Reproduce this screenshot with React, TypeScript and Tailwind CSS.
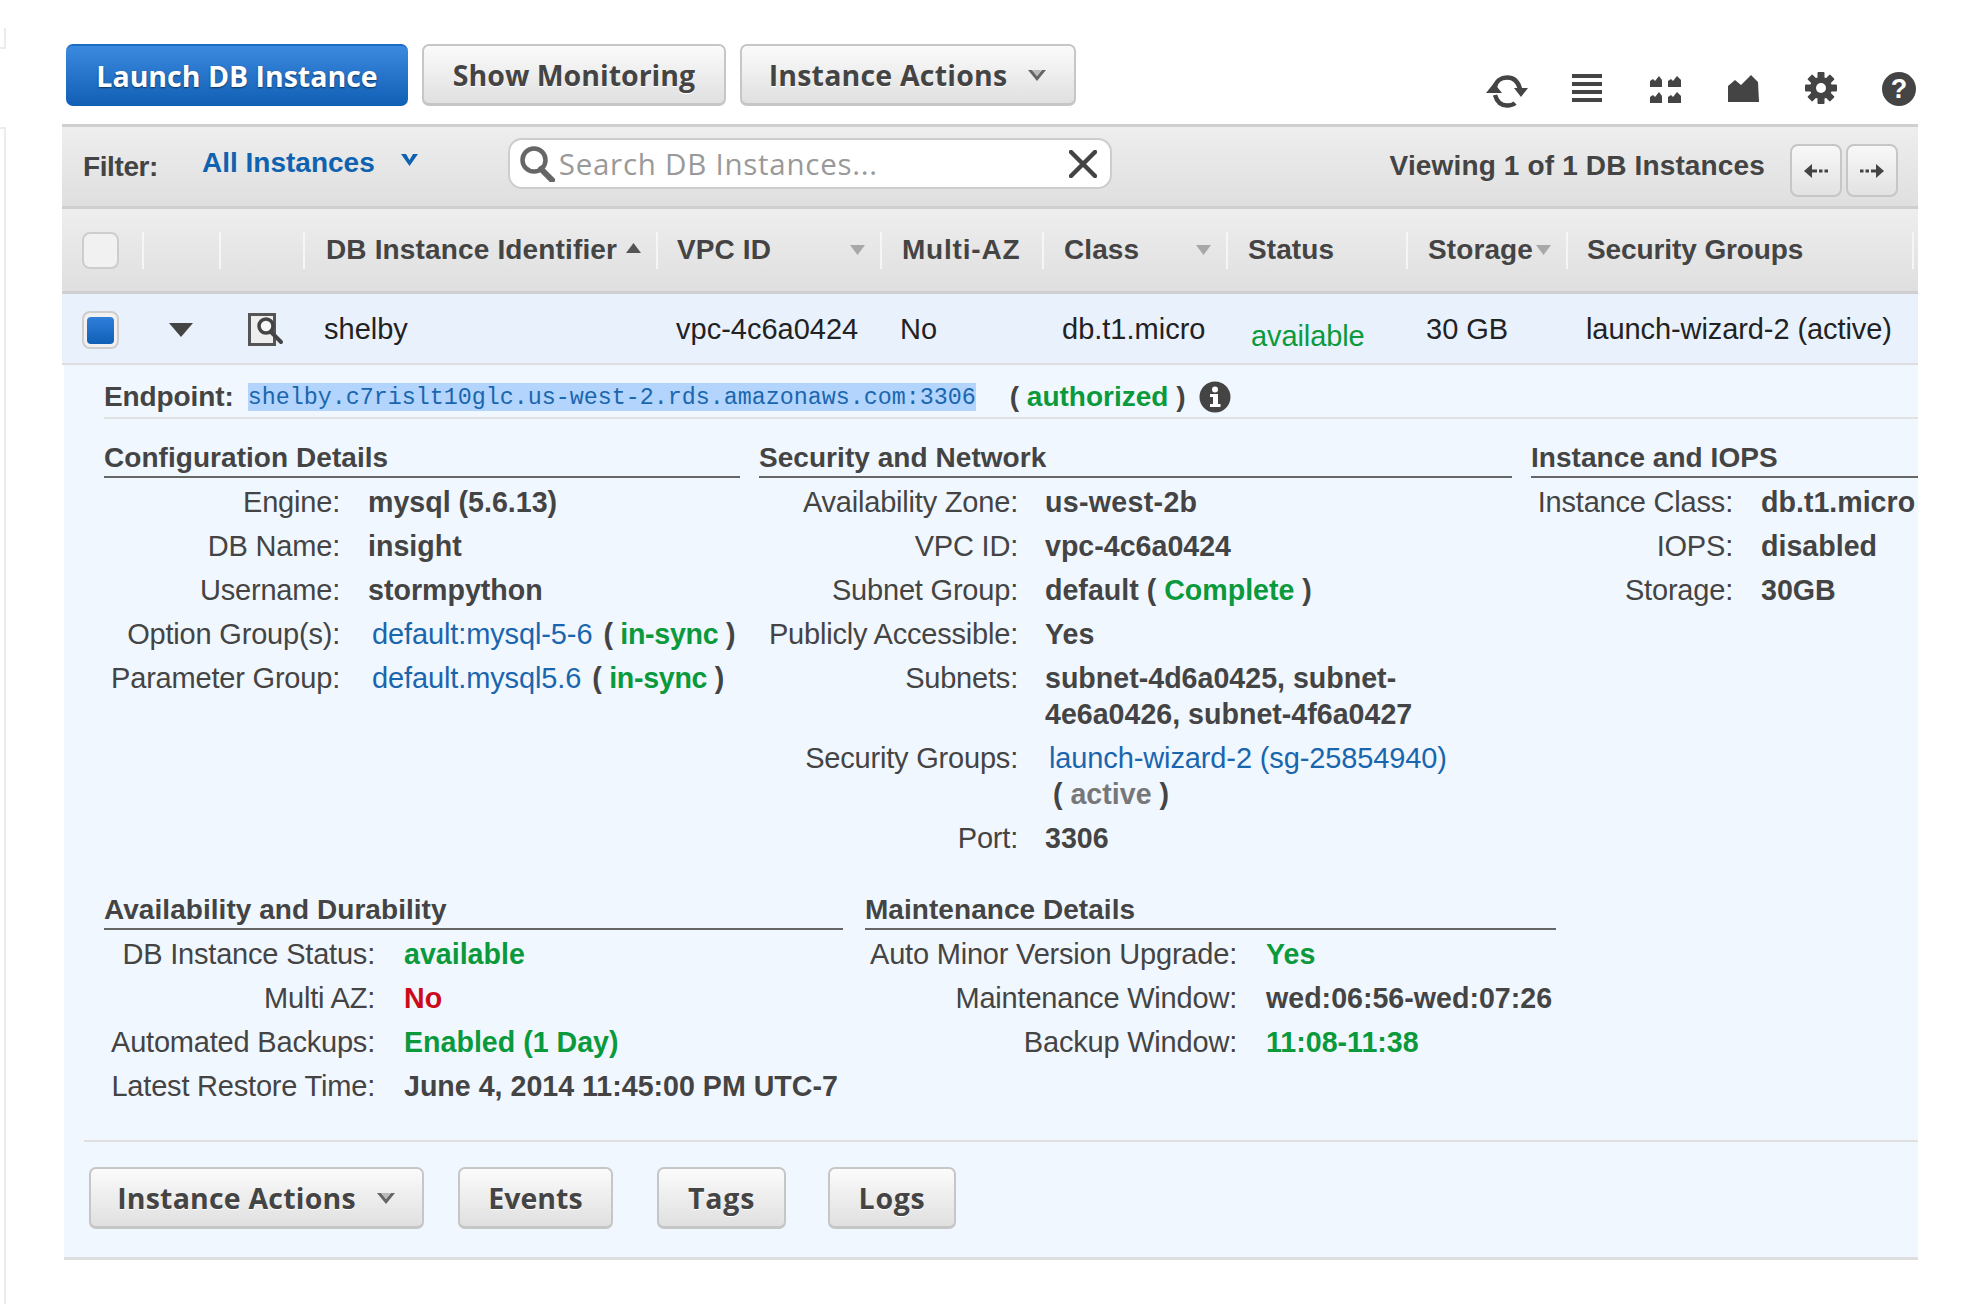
import type { ReactNode } from "react";

const G = ({ children }: { children: ReactNode }) => <span className="text-[#0a9a3c]">{children}</span>;
const A = ({ children }: { children: ReactNode }) => (
  <span className="font-normal text-[29px] text-[#1a66ae] tracking-[-0.12px]">{children}</span>
);

function Chevrons() {
  return (
    <svg width="20" height="14" viewBox="0 0 20 14">
      <path d="M1 1 L10 12 L19 1 L15 1 L10 7 L5 1 Z" fill="#666" />
      <path d="M5 1 L10 7 L15 1 Z" fill="#bbb" />
    </svg>
  );
}

function GrayBtn({ w, children }: { w: string; children: ReactNode }) {
  return (
    <div
      className={`${w} h-[62px] shrink-0 rounded-[7px] border-2 border-b-[3px] border-[#c6c6c6] bg-gradient-to-b from-[#fbfbfb] to-[#e0e0e0] flex items-center justify-center gap-[20px] pt-[2px] font-['Open_Sans',sans-serif] font-bold text-[28.5px] text-[#444] [text-shadow:0_1px_0_#fff]`}
    >
      {children}
    </div>
  );
}

function Row({ l, w, gap, children }: { l: string; w: string; gap: string; children: ReactNode }) {
  return (
    <div className={`flex ${gap} py-[4px] leading-[36px]`}>
      <div className={`${w} shrink-0 text-right text-[29px] tracking-[-0.2px] whitespace-nowrap`}>{l}</div>
      <div className="font-bold text-[28.6px] min-w-0 whitespace-nowrap">{children}</div>
    </div>
  );
}

function Heading({ children }: { children: ReactNode }) {
  return (
    <div className="h-[38px] leading-[36px] border-b-2 border-[#666] font-bold text-[28px] tracking-[0.05px] text-[#444] whitespace-nowrap">
      {children}
    </div>
  );
}

function Caret({ up }: { up?: boolean }) {
  return up ? (
    <svg width="15" height="10" viewBox="0 0 15 10" className="mb-[4px]">
      <path d="M7.5 0 L15 10 L0 10 Z" fill="#555" />
    </svg>
  ) : (
    <svg width="15" height="10" viewBox="0 0 15 10">
      <path d="M0 0 L15 0 L7.5 10 Z" fill="#a8a8a8" />
    </svg>
  );
}

function HeadCell({ w, pl, caret, children }: { w: string; pl: string; caret?: "up" | "down"; children?: ReactNode }) {
  return (
    <div className={`${w} ${pl} h-[37px] shrink-0 border-r-2 border-[#f6f6f6] flex items-center justify-between pr-[15px] font-bold text-[28px] tracking-[0.1px] text-[#444] whitespace-nowrap`}>
      <span>{children}</span>
      {caret && <Caret up={caret === "up"} />}
    </div>
  );
}

function BodyCell({ w, pl, extra, children }: { w: string; pl: string; extra?: string; children?: ReactNode }) {
  return <div className={`${w} ${pl} ${extra ?? ""} shrink-0 whitespace-nowrap`}>{children}</div>;
}

export default function App() {
  return (
    <div className="w-[1968px] h-[1304px] bg-white overflow-hidden flex font-['Liberation_Sans',Arial,sans-serif] text-[29px] text-[#444]">
      {/* clipped sidebar edge */}
      <div className="w-[62px] shrink-0 flex flex-col">
        <div className="mt-[28px] h-[21px] w-[6px] border-r-2 border-b-2 border-[#ececec]" />
        <div className="mt-[78px] flex-1 w-[6px] border-r-2 border-t-2 border-[#ececec]" />
      </div>

      <div className="w-[1856px] shrink-0 overflow-hidden">
        {/* toolbar */}
        <div className="h-[124px] pt-[44px] pl-[4px] flex items-start gap-[14px]">
          <div className="w-[342px] h-[62px] shrink-0 rounded-[7px] border-t-2 border-[#1c6cc4] bg-gradient-to-b from-[#3a8ae0] to-[#0f5fb5] flex items-center justify-center font-['Open_Sans',sans-serif] font-bold text-[28.5px] text-white [text-shadow:0_1px_2px_rgba(0,0,0,0.55)]">
            Launch DB Instance
          </div>
          <GrayBtn w="w-[304px]">Show Monitoring</GrayBtn>
          <GrayBtn w="w-[336px]">
            <span className="tracking-[0.2px]">Instance Actions</span>
            <Chevrons />
          </GrayBtn>
          <div className="ml-auto mr-[2px] -mt-[44px] pt-[72px] flex items-start text-[#444]">
            <svg width="42" height="33" viewBox="0 0 42 33" className="mt-[3px]">
              <g fill="none" stroke="#444" strokeWidth="4.5">
                <path d="M9 12 C10 6 15 2.5 21 2.5 C27 2.5 32 6 34 14" />
                <path d="M9 20 C11 27 15 30.5 21 30.5 C24 30.5 27 30 29 28" />
              </g>
              <path d="M28 13 L42 13 L35 22 Z M0 18 L16 18 L8 8 Z" fill="#444" />
            </svg>
            <svg width="30" height="29" viewBox="0 0 30 29" className="ml-[44px] mt-[2px]" fill="#444">
              <rect y="0" width="30" height="4" />
              <rect y="8" width="30" height="4" />
              <rect y="16" width="30" height="4" />
              <rect y="24" width="30" height="4" />
            </svg>
            <svg width="31" height="27" viewBox="0 0 31 27" className="ml-[48px] mt-[4px]" fill="#444">
              <path d="M0 11 L0 5 L3 3 L5 5 L9 0 L12 4 L12 11 Z M18 11 L18 5 L21 3 L23 5 L27 0 L31 4 L31 11 Z M0 27 L0 21 L3 19 L5 21 L9 16 L12 20 L12 27 Z M18 27 L18 21 L21 19 L23 21 L27 16 L31 20 L31 27 Z" />
            </svg>
            <svg width="31" height="27" viewBox="0 0 31 27" className="ml-[47px] mt-[3px]" fill="#444">
              <path d="M0 27 L0 11 L7 5 L13 10 L23 0 L30 7 L31 27 Z" />
            </svg>
            <svg width="32" height="32" viewBox="0 0 32 32" className="ml-[46px]" fill="#444">
              <circle cx="16" cy="16" r="11" />
              <g>
                <rect x="12.5" y="0" width="7" height="32" rx="1" />
                <rect x="12.5" y="0" width="7" height="32" rx="1" transform="rotate(45 16 16)" />
                <rect x="12.5" y="0" width="7" height="32" rx="1" transform="rotate(90 16 16)" />
                <rect x="12.5" y="0" width="7" height="32" rx="1" transform="rotate(135 16 16)" />
              </g>
              <circle cx="16" cy="16" r="5" fill="#fff" />
            </svg>
            <div className="ml-[45px] w-[34px] h-[34px] rounded-full bg-[#444] flex items-center justify-center text-white font-bold text-[27px] leading-none">
              ?
            </div>
          </div>
        </div>

        {/* filter bar */}
        <div className="h-[85px] border-y-[3px] border-[#cfcfcf] bg-gradient-to-b from-[#eeeeee] to-[#dfdfdf] flex items-start">
          <div className="ml-[21px] mt-[22px] font-bold text-[28px] tracking-[-0.4px] leading-[36px] text-[#444]">Filter:</div>
          <div className="ml-[44px] mt-[18px] font-bold text-[28px] leading-[36px] text-[#0f62b0]">All Instances</div>
          <svg width="17" height="12" viewBox="0 0 17 12" className="ml-[26px] mt-[27px]">
            <path d="M0 0 L5 0 L8.5 6 L12 0 L17 0 L8.5 12 Z" fill="#0f62b0" />
          </svg>
          <div className="ml-[90px] mt-[11px] w-[604px] h-[51px] shrink-0 rounded-[14px] border-2 border-[#cdcdcd] bg-white flex items-center">
            <svg width="36" height="36" viewBox="0 0 36 36" className="ml-[9px] shrink-0">
              <circle cx="15" cy="14" r="11.5" fill="none" stroke="#666" strokeWidth="4.5" />
              <path d="M22 23 L33 34" stroke="#666" strokeWidth="6" strokeLinecap="round" />
            </svg>
            <div className="ml-[4px] pt-[2px] font-['Open_Sans',sans-serif] text-[29.5px] tracking-[0.75px] text-[#999] whitespace-nowrap">Search DB Instances...</div>
            <svg width="28" height="28" viewBox="0 0 28 28" className="ml-auto mr-[13px] shrink-0">
              <path d="M2 2 L26 26 M26 2 L2 26" stroke="#444" strokeWidth="4.5" strokeLinecap="round" />
            </svg>
          </div>
          <div className="ml-auto mt-[21px] font-bold text-[28px] leading-[36px] tracking-[0.15px] text-[#444] whitespace-nowrap">Viewing 1 of 1 DB Instances</div>
          <div className="ml-[25px] mr-[20px] mt-[17px] flex gap-[4px]">
            <div className="w-[52px] h-[53px] rounded-[8px] border-2 border-[#c6c6c6] bg-gradient-to-b from-[#f8f8f8] to-[#e2e2e2] flex items-center justify-center">
              <svg width="24" height="14" viewBox="0 0 24 14" fill="#444">
                <path d="M0 7 L8 0 L8 14 Z" />
                <rect x="8" y="5.5" width="5" height="3" />
                <rect x="15" y="5.5" width="3.5" height="3" />
                <rect x="20.5" y="5.5" width="3.5" height="3" />
              </svg>
            </div>
            <div className="w-[52px] h-[53px] rounded-[8px] border-2 border-[#c6c6c6] bg-gradient-to-b from-[#f8f8f8] to-[#e2e2e2] flex items-center justify-center">
              <svg width="24" height="14" viewBox="0 0 24 14" fill="#444">
                <path d="M24 7 L16 0 L16 14 Z" />
                <rect x="11" y="5.5" width="5" height="3" />
                <rect x="5.5" y="5.5" width="3.5" height="3" />
                <rect x="0" y="5.5" width="3.5" height="3" />
              </svg>
            </div>
          </div>
        </div>

        {/* table head */}
        <div className="h-[85px] border-b-[3px] border-[#cfcfcf] bg-gradient-to-b from-[#eeeeee] to-[#dfdfdf] flex items-center">
          <HeadCell w="w-[82px]" pl="pl-[20px]">
            <div className="w-[37px] h-[37px] rounded-[8px] border-2 border-[#cdcdcd] bg-[#f1f1f1]" />
          </HeadCell>
          <HeadCell w="w-[77px]" pl="" />
          <HeadCell w="w-[84px]" pl="" />
          <HeadCell w="w-[353px]" pl="pl-[21px]" caret="up"><span className="tracking-[0.15px]">DB Instance Identifier</span></HeadCell>
          <HeadCell w="w-[224px]" pl="pl-[19px]" caret="down">VPC ID</HeadCell>
          <HeadCell w="w-[162px]" pl="pl-[20px]"><span className="tracking-[0.8px]">Multi-AZ</span></HeadCell>
          <HeadCell w="w-[184px]" pl="pl-[20px]" caret="down">Class</HeadCell>
          <HeadCell w="w-[180px]" pl="pl-[20px]">Status</HeadCell>
          <HeadCell w="w-[160px]" pl="pl-[20px]" caret="down">Storage</HeadCell>
          <HeadCell w="w-[346px]" pl="pl-[19px]"><span className="tracking-[-0.1px]">Security Groups</span></HeadCell>
        </div>

        {/* selected row */}
        <div className="h-[71px] pt-[3px] border-b-2 border-[#dedede] bg-[#e9f1fd] flex items-center text-[29px] text-[#222]">
          <div className="w-[82px] shrink-0 pl-[20px]">
            <div className="w-[37px] h-[38px] rounded-[8px] border-2 border-[#cdcdcd] bg-[#f1f1f1] flex items-center justify-center">
              <div className="w-[27px] h-[27px] rounded-[4px] bg-gradient-to-b from-[#2f80dc] to-[#0f5fb5]" />
            </div>
          </div>
          <div className="w-[78px] shrink-0 pl-[25px]">
            <svg width="24" height="14" viewBox="0 0 24 14">
              <path d="M0 0 L24 0 L12 14 Z" fill="#444" />
            </svg>
          </div>
          <div className="w-[84px] shrink-0 pl-[26px]">
            <svg width="36" height="34" viewBox="0 0 36 34">
              <rect x="1.5" y="1.5" width="25" height="30" fill="#eeeeee" stroke="#555" strokeWidth="3" />
              <circle cx="18" cy="13" r="7" fill="#f7f7f7" stroke="#444" strokeWidth="3.5" />
              <path d="M23 19 L33 29" stroke="#444" strokeWidth="4" strokeLinecap="round" />
            </svg>
          </div>
          <BodyCell w="w-[352px]" pl="pl-[18px]">shelby</BodyCell>
          <BodyCell w="w-[224px]" pl="pl-[18px]">vpc-4c6a0424</BodyCell>
          <BodyCell w="w-[162px]" pl="pl-[18px]">No</BodyCell>
          <BodyCell w="w-[184px]" pl="pl-[18px]">db.t1.micro</BodyCell>
          <BodyCell w="w-[180px]" pl="pl-[23px]" extra="mt-[13px] text-[#0a9a3c] tracking-[-0.1px]">available</BodyCell>
          <BodyCell w="w-[160px]" pl="pl-[18px]">30 GB</BodyCell>
          <BodyCell w="w-[346px]" pl="pl-[18px]" extra="tracking-[-0.08px]">launch-wizard-2 (active)</BodyCell>
        </div>

        {/* detail panel */}
        <div className="ml-[2px] h-[895px] bg-[#f1f7ff] border-b-[3px] border-[#dedede] flex flex-col">
          <div className="ml-[40px] h-[54px] pt-[12px] border-b-2 border-[#e2e2e2] flex items-center">
            <span className="font-bold text-[28px] tracking-[-0.1px]">Endpoint:</span>
            <span className="ml-[14px] h-[28px] leading-[30px] bg-[#b3d4fc] font-['Liberation_Mono',monospace] text-[23.33px] text-[#1a66ae] whitespace-nowrap">
              shelby.c7rislt10glc.us-west-2.rds.amazonaws.com:3306
            </span>
            <span className="ml-[34px] font-bold text-[28px] whitespace-pre">
              ( <G>authorized</G> )
            </span>
            <svg width="32" height="32" viewBox="0 0 32 32" className="ml-[14px]">
              <circle cx="16" cy="16" r="15.5" fill="#444" />
              <circle cx="16" cy="8.5" r="3" fill="#fff" />
              <path d="M11 13 H19 V23 H21.5 V26 H11 V23 H14 V16 H11 Z" fill="#fff" />
            </svg>
          </div>

          <div className="ml-[40px] mt-[21px] flex gap-[19px] h-[420px] items-start">
            <div className="w-[636px] shrink-0">
              <Heading>Configuration Details</Heading>
              <div className="mt-[2px]">
                <Row l="Engine:" w="w-[236px]" gap="gap-[28px]">mysql (5.6.13)</Row>
                <Row l="DB Name:" w="w-[236px]" gap="gap-[28px]">insight</Row>
                <Row l="Username:" w="w-[236px]" gap="gap-[28px]">stormpython</Row>
                <Row l="Option Group(s):" w="w-[236px]" gap="gap-[28px]">
                  <span className="ml-[4px] whitespace-pre"><A>default:mysql-5-6</A><span className="ml-[11px] tracking-[-0.3px]">( <G>in-sync</G> )</span></span>
                </Row>
                <Row l="Parameter Group:" w="w-[236px]" gap="gap-[28px]">
                  <span className="ml-[4px] whitespace-pre"><A>default.mysql5.6</A><span className="ml-[11px] tracking-[-0.3px]">( <G>in-sync</G> )</span></span>
                </Row>
              </div>
            </div>
            <div className="w-[753px] shrink-0">
              <Heading>Security and Network</Heading>
              <div className="mt-[2px]">
                <Row l="Availability Zone:" w="w-[259px]" gap="gap-[27px]"><span className="tracking-[0.3px]">us-west-2b</span></Row>
                <Row l="VPC ID:" w="w-[259px]" gap="gap-[27px]">vpc-4c6a0424</Row>
                <Row l="Subnet Group:" w="w-[259px]" gap="gap-[27px]">default ( <G>Complete</G> )</Row>
                <Row l="Publicly Accessible:" w="w-[259px]" gap="gap-[27px]">Yes</Row>
                <Row l="Subnets:" w="w-[259px]" gap="gap-[27px]">subnet-4d6a0425, subnet-<br />4e6a0426, subnet-4f6a0427</Row>
                <Row l="Security Groups:" w="w-[259px]" gap="gap-[27px]">
                  <div className="pl-[4px]"><A>launch-wizard-2 (sg-25854940)</A></div>
                  <div className="pl-[8px]">( <span className="text-[#777]">active</span> )</div>
                </Row>
                <Row l="Port:" w="w-[259px]" gap="gap-[27px]">3306</Row>
              </div>
            </div>
            <div className="w-[500px] shrink-0">
              <Heading>Instance and IOPS</Heading>
              <div className="mt-[2px]">
                <Row l="Instance Class:" w="w-[202px]" gap="gap-[28px]">db.t1.micro</Row>
                <Row l="IOPS:" w="w-[202px]" gap="gap-[28px]">disabled</Row>
                <Row l="Storage:" w="w-[202px]" gap="gap-[28px]">30GB</Row>
              </div>
            </div>
          </div>

          <div className="ml-[40px] mt-[32px] flex gap-[22px] items-start">
            <div className="w-[739px] shrink-0">
              <Heading>Availability and Durability</Heading>
              <div className="mt-[2px]">
                <Row l="DB Instance Status:" w="w-[271px]" gap="gap-[29px]"><G>available</G></Row>
                <Row l="Multi AZ:" w="w-[271px]" gap="gap-[29px]"><span className="text-[#cc0a1c]">No</span></Row>
                <Row l="Automated Backups:" w="w-[271px]" gap="gap-[29px]"><G>Enabled (1 Day)</G></Row>
                <Row l="Latest Restore Time:" w="w-[271px]" gap="gap-[29px]">June 4, 2014 11:45:00 PM UTC-7</Row>
              </div>
            </div>
            <div className="w-[691px] shrink-0">
              <Heading>Maintenance Details</Heading>
              <div className="mt-[2px]">
                <Row l="Auto Minor Version Upgrade:" w="w-[372px]" gap="gap-[29px]"><G>Yes</G></Row>
                <Row l="Maintenance Window:" w="w-[372px]" gap="gap-[29px]">wed:06:56-wed:07:26</Row>
                <Row l="Backup Window:" w="w-[372px]" gap="gap-[29px]"><G>11:08-11:38</G></Row>
              </div>
            </div>
          </div>

          <div className="ml-[20px] mt-[32px] border-t-2 border-[#dfdfdf] pt-[25px] pl-[5px] flex">
            <GrayBtn w="w-[335px]">
              <span className="tracking-[0.2px]">Instance Actions</span>
              <Chevrons />
            </GrayBtn>
            <div className="ml-[34px]"><GrayBtn w="w-[155px]">Events</GrayBtn></div>
            <div className="ml-[44px]"><GrayBtn w="w-[129px]"><span className="tracking-[0.8px]">Tags</span></GrayBtn></div>
            <div className="ml-[42px]"><GrayBtn w="w-[128px]"><span className="tracking-[0.7px]">Logs</span></GrayBtn></div>
          </div>
        </div>
      </div>
    </div>
  );
}
